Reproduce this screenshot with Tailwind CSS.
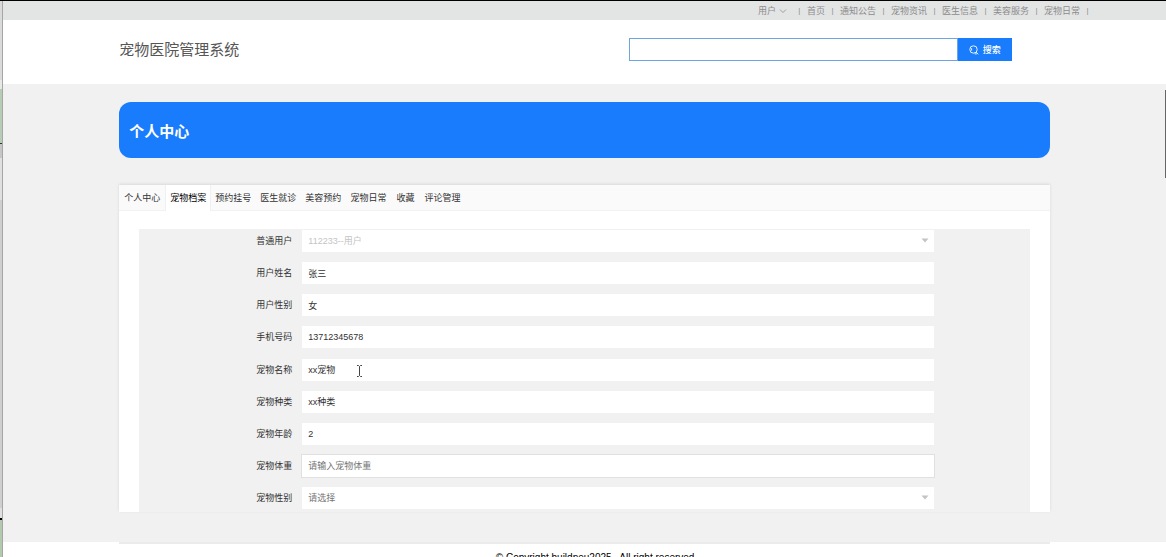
<!DOCTYPE html>
<html lang="zh-CN">
<head>
  <meta charset="UTF-8">
  <meta name="viewport" content="width=device-width, initial-scale=1.0">
  <title>宠物医院管理系统</title>
  <script src="https://cdn.jsdelivr.net/npm/@tailwindcss/browser@4"></script>
</head>
<body class="bg-white font-['Liberation_Sans','Noto_Sans_CJK_SC',sans-serif] text-[9px] leading-3 text-[#333]">
  <div class="relative flex h-screen overflow-hidden border-t border-black">
    <!-- 左侧窗口边缘 -->
    <div class="flex w-[3px] shrink-0 flex-col border-r border-[#a6a6a6] bg-[#cfcfcf]">
      <div class="h-[79px] bg-[#dadada]"></div>
      <div class="h-[9px] bg-[#e8e8e8]"></div>
      <div class="h-[55px] border-b border-[#333] bg-[#b7ccb4]"></div>
      <div class="h-[14px] bg-[#c6c6c6]"></div>
      <div class="h-[42px] bg-[#e0e0e0]"></div>
      <div class="flex-1 bg-[#cfcfcf]"></div>
      <div class="h-[10px] bg-[#e0e0e0]"></div>
      <div class="h-[39px] border-t-2 border-black bg-[#b3c9ae]"></div>
    </div>

    <div class="min-w-0 flex-1">
      <!-- 顶部导航 -->
      <nav class="flex h-[19px] items-center justify-end bg-[#e3e4e4] pr-[76px] text-[#8c8c8c]">
        <button type="button" class="mr-[10px] flex items-center gap-[3px]">用户
          <svg class="h-2 w-2" viewBox="0 0 8 8" fill="none" stroke="#8c8c8c" stroke-width="0.8"><path d="M1 2.5 4 5.5 7 2.5"/></svg>
        </button>
        <span class="w-[5px] text-center text-[8px]">|</span>
        <a href="#" class="px-[5px]">首页</a>
        <span class="w-[5px] text-center text-[8px]">|</span>
        <a href="#" class="px-[5px]">通知公告</a>
        <span class="w-[5px] text-center text-[8px]">|</span>
        <a href="#" class="px-[5px]">宠物资讯</a>
        <span class="w-[5px] text-center text-[8px]">|</span>
        <a href="#" class="px-[5px]">医生信息</a>
        <span class="w-[5px] text-center text-[8px]">|</span>
        <a href="#" class="px-[5px]">美容服务</a>
        <span class="w-[5px] text-center text-[8px]">|</span>
        <a href="#" class="px-[5px]">宠物日常</a>
        <span class="w-[5px] text-center text-[8px]">|</span>
      </nav>

      <!-- 标题和搜索 -->
      <header class="h-16 bg-white">
        <div class="mx-auto flex h-full w-4/5 items-center justify-between pr-[38px] pb-[5px]">
          <h1 class="text-[15px] leading-5 text-[#555]">宠物医院管理系统</h1>
          <form class="flex w-[383px]">
            <input type="text" aria-label="搜索" class="h-[23px] min-w-0 flex-1 border border-[#6ea5e0] bg-white px-2 outline-none">
            <button type="button" class="flex h-[23px] w-[54px] items-center justify-center gap-1 bg-[#187cfd] font-medium text-white">
              <svg class="h-[10px] w-[10px]" viewBox="0 0 10 10" fill="none" stroke="#fff" stroke-width="0.9"><circle cx="4.5" cy="4.5" r="3.7"/><path d="M2.6 3.2v2.4M7.2 7.2 9.3 9.3M5.8 8.9h2"/></svg>
              搜索
            </button>
          </form>
        </div>
      </header>

      <main class="bg-[#f1f1f1] pt-[18px] pb-[30px]">
        <div class="mx-auto w-4/5">
          <div class="flex h-14 items-center rounded-xl bg-[#187cfd] px-[10px] pt-1">
            <h2 class="text-[15px] leading-5 font-bold text-white">个人中心</h2>
          </div>

          <!-- 选项卡 -->
          <section class="mt-[27px] flex h-[327px] flex-col overflow-hidden bg-white shadow-[0_-1px_3px_rgba(0,0,0,0.1)]">
            <div class="flex h-[26px] shrink-0 border-b border-[#f2f2f2] bg-[#fafafa]">
              <button type="button" class="px-[5px]">个人中心</button>
              <button type="button" class="-mb-px border-x border-[#f0f0f0] bg-white px-1 text-black">宠物档案</button>
              <button type="button" class="px-1">预约挂号</button>
              <button type="button" class="px-[5px]">医生就诊</button>
              <button type="button" class="px-1">美容预约</button>
              <button type="button" class="px-[5px]">宠物日常</button>
              <button type="button" class="px-[5px]">收藏</button>
              <button type="button" class="px-[5px]">评论管理</button>
            </div>
            <!-- 宠物档案表单 -->
            <form class="mx-5 mt-[18px] flex flex-1 flex-col justify-between bg-[#f1f1f1] pt-px pr-24 pb-[3px] pl-28">
              <div class="flex h-[22px] items-center">
                <label for="account" class="w-[41px] shrink-0 text-right">普通用户</label>
                <div class="relative ml-[10px] flex-1">
                  <select id="account" disabled class="block h-[22px] w-full appearance-none bg-white px-[6px] text-[#c4c4c4] opacity-100"><option>112233--用户</option></select>
                  <svg class="pointer-events-none absolute top-2 right-[5px] h-[5px] w-2" viewBox="0 0 8 5"><path d="M0.5 0.5h7L4 4.5z" fill="#c4c4c4"/></svg>
                </div>
              </div>
              <div class="flex h-[22px] items-center">
                <label for="username" class="w-[41px] shrink-0 text-right">用户姓名</label>
                <input id="username" type="text" value="张三" class="ml-[10px] h-[22px] min-w-0 flex-1 bg-white px-[6px]">
              </div>
              <div class="flex h-[22px] items-center">
                <label for="gender" class="w-[41px] shrink-0 text-right">用户性别</label>
                <input id="gender" type="text" value="女" class="ml-[10px] h-[22px] min-w-0 flex-1 bg-white px-[6px]">
              </div>
              <div class="flex h-[22px] items-center">
                <label for="phone" class="w-[41px] shrink-0 text-right">手机号码</label>
                <input id="phone" type="text" value="13712345678" class="ml-[10px] h-[22px] min-w-0 flex-1 bg-white px-[6px]">
              </div>
              <div class="flex h-[22px] items-center">
                <label for="petname" class="w-[41px] shrink-0 text-right">宠物名称</label>
                <div class="relative ml-[10px] flex-1">
                  <input id="petname" type="text" value="xx宠物" class="block h-[22px] w-full bg-white px-[6px]">
                  <svg class="pointer-events-none absolute top-[6px] left-[54px] h-3 w-[7px]" viewBox="0 0 7 12" fill="none" stroke="#444" stroke-width="1"><path d="M1 .5h1.5l1 1 1-1H6M3.5 1.5v9M1 11.5h1.5l1-1 1 1H6"/></svg>
                </div>
              </div>
              <div class="flex h-[22px] items-center">
                <label for="pettype" class="w-[41px] shrink-0 text-right">宠物种类</label>
                <input id="pettype" type="text" value="xx种类" class="ml-[10px] h-[22px] min-w-0 flex-1 bg-white px-[6px]">
              </div>
              <div class="flex h-[22px] items-center">
                <label for="petage" class="w-[41px] shrink-0 text-right">宠物年龄</label>
                <input id="petage" type="text" value="2" class="ml-[10px] h-[22px] min-w-0 flex-1 bg-white px-[6px]">
              </div>
              <div class="flex h-[22px] items-center">
                <label for="petweight" class="w-[41px] shrink-0 text-right">宠物体重</label>
                <input id="petweight" type="text" placeholder="请输入宠物体重" class="ml-[10px] h-[22px] min-w-0 flex-1 bg-white px-[6px] outline outline-[#e0e0e0] placeholder:text-[#757575]">
              </div>
              <div class="flex h-[22px] items-center">
                <label for="petgender" class="w-[41px] shrink-0 text-right">宠物性别</label>
                <div class="relative ml-[10px] flex-1">
                  <select id="petgender" class="block h-[22px] w-full appearance-none bg-white px-[6px] text-[#757575]"><option>请选择</option><option>公</option><option>母</option></select>
                  <svg class="pointer-events-none absolute top-2 right-[5px] h-[5px] w-2" viewBox="0 0 8 5"><path d="M0.5 0.5h7L4 4.5z" fill="#c4c4c4"/></svg>
                </div>
              </div>
            </form>
          </section>
        </div>
      </main>

      <footer class="bg-white">
        <div class="mx-auto w-4/5 border-t-2 border-[#ebebeb] pt-2 text-center">
          <p class="pl-6 text-[10px] text-black">© Copyright buildneu2025 , All right reserved.</p>
        </div>
      </footer>
    </div>

    <!-- 滚动条 -->
    <div class="absolute top-[89px] right-0 h-[88px] w-px bg-[#666]"></div>
  </div>
</body>
</html>
